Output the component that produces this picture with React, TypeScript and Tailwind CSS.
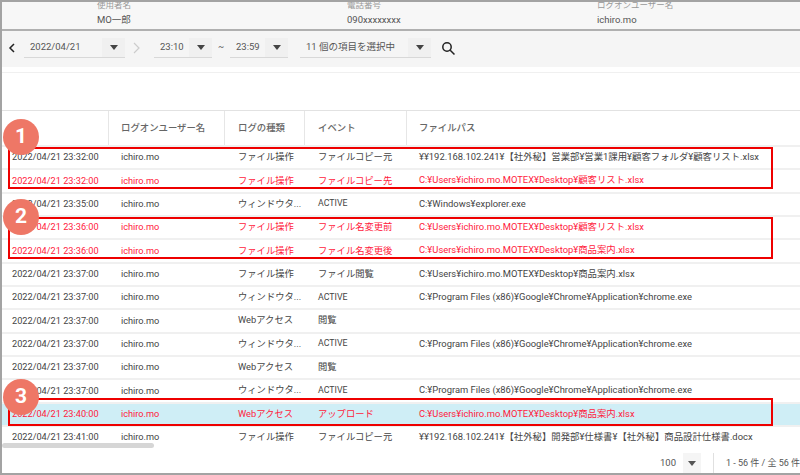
import React from "react";

type Row = { d: string; t: string; e: string; p: string; red?: boolean; blue?: boolean };
const rows: Row[] = [
  { d: "2022/04/21 23:32:00", t: "ファイル操作", e: "ファイルコピー元", p: "¥¥192.168.102.241¥【社外秘】営業部¥営業1課用¥顧客フォルダ¥顧客リスト.xlsx" },
  { d: "2022/04/21 23:32:00", t: "ファイル操作", e: "ファイルコピー先", p: "C:¥Users¥ichiro.mo.MOTEX¥Desktop¥顧客リスト.xlsx", red: true },
  { d: "2022/04/21 23:35:00", t: "ウィンドウタ...", e: "ACTIVE", p: "C:¥Windows¥explorer.exe" },
  { d: "2022/04/21 23:36:00", t: "ファイル操作", e: "ファイル名変更前", p: "C:¥Users¥ichiro.mo.MOTEX¥Desktop¥顧客リスト.xlsx", red: true },
  { d: "2022/04/21 23:36:00", t: "ファイル操作", e: "ファイル名変更後", p: "C:¥Users¥ichiro.mo.MOTEX¥Desktop¥商品案内.xlsx", red: true },
  { d: "2022/04/21 23:37:00", t: "ファイル操作", e: "ファイル閲覧", p: "C:¥Users¥ichiro.mo.MOTEX¥Desktop¥商品案内.xlsx" },
  { d: "2022/04/21 23:37:00", t: "ウィンドウタ...", e: "ACTIVE", p: "C:¥Program Files (x86)¥Google¥Chrome¥Application¥chrome.exe" },
  { d: "2022/04/21 23:37:00", t: "Webアクセス", e: "閲覧", p: "" },
  { d: "2022/04/21 23:37:00", t: "ウィンドウタ...", e: "ACTIVE", p: "C:¥Program Files (x86)¥Google¥Chrome¥Application¥chrome.exe" },
  { d: "2022/04/21 23:37:00", t: "Webアクセス", e: "閲覧", p: "" },
  { d: "2022/04/21 23:37:00", t: "ウィンドウタ...", e: "ACTIVE", p: "C:¥Program Files (x86)¥Google¥Chrome¥Application¥chrome.exe" },
  { d: "2022/04/21 23:40:00", t: "Webアクセス", e: "アップロード", p: "C:¥Users¥ichiro.mo.MOTEX¥Desktop¥商品案内.xlsx", red: true, blue: true },
  { d: "2022/04/21 23:41:00", t: "ファイル操作", e: "ファイルコピー元", p: "¥¥192.168.102.241¥【社外秘】開発部¥仕様書¥【社外秘】商品設計仕様書.docx" },
];

function Select({ w, label }: { w: string; label: string }) {
  return (
    <div className={`flex h-[20px] items-center justify-between border-b border-[#d8d8d8] ${w}`}>
      <span className="pl-[6px] text-[9.5px] text-[#555]">{label}</span>
      <div className="flex h-full w-[23px] shrink-0 items-center justify-center bg-[#f0f0f0]">
        <div className="h-0 w-0 border-x-[4px] border-t-[5px] border-x-transparent border-t-[#444]" />
      </div>
    </div>
  );
}

function Badge({ n, cls }: { n: string; cls: string }) {
  return (
    <div className={`absolute left-[1px] flex h-[36px] w-[36px] items-center justify-center rounded-full bg-[#ee7766] text-[21px] font-bold text-white ${cls}`}>
      {n}
    </div>
  );
}

function Info({ w, label, value }: { w: string; label: string; value: string }) {
  return (
    <div className={w}>
      <div className="mt-[-3px] text-[8.5px] leading-[12px] text-[#999]">{label}</div>
      <div className="mt-[2px] text-[9.5px] leading-[14px] text-[#555]">{value}</div>
    </div>
  );
}

export default function App() {
  return (
    <div
      className="relative h-[475px] w-[800px] overflow-hidden border-y-2 border-l-2 border-[#a3a3a3] bg-white text-[10px] text-[#444]"
      style={{ fontFamily: '"Roboto", "Noto Sans CJK JP", sans-serif' }}
    >
      {/* user info */}
      <div className="flex h-[29px] border-b-2 border-[#b0b0b0] bg-[#f7f7f7] pl-[95px]">
        <Info w="w-[250px]" label="使用者名" value="MO一郎" />
        <Info w="w-[250px]" label="電話番号" value="090xxxxxxxx" />
        <Info w="" label="ログオンユーザー名" value="ichiro.mo" />
      </div>

      {/* toolbar */}
      <div className="flex h-[36px] items-center bg-[#f5f5f5] pb-[3px]">
        <svg width="10" height="10" viewBox="0 0 10 10" className="ml-[5px] mr-[7px]" fill="none" stroke="#222" strokeWidth="1.5"><path d="M7 1 3 5l4 4" /></svg>
        <Select w="w-[101px]" label="2022/04/21" />
        <svg width="10" height="12" viewBox="0 0 10 12" className="ml-[7px] mr-[12px]" fill="none" stroke="#ccc" strokeWidth="1.2"><path d="m2 1 5 5-5 5" /></svg>
        <Select w="w-[58px]" label="23:10" />
        <span className="mx-[6px] w-[6px] text-[9px] text-[#555]">~</span>
        <Select w="w-[58px]" label="23:59" />
        <div className="w-[12px]" />
        <Select w="w-[131px]" label="11 個の項目を選択中" />
        <svg width="15" height="15" viewBox="0 0 15 15" className="ml-[10px] mt-[1px]" fill="none" stroke="#222" strokeWidth="1.5"><circle cx="6" cy="6" r="4.2" /><path d="m9.2 9.2 4.3 4.3" /></svg>
      </div>

      <div className="h-[6px] border-b border-[#f0f0f0]" />

      <div className="h-[37px]" />

      {/* table */}
      <div className="border-t border-[#e2e2e2]">
        <div className="flex h-[34px] items-center text-[9.4px] font-medium text-[#666]">
          <div className="h-full w-[107px] border-r border-[#e6e6e6]" />
          <div className="flex h-full w-[116px] items-center border-r border-[#e6e6e6] pl-[12px]">ログオンユーザー名</div>
          <div className="flex h-full w-[80px] items-center border-r border-[#e6e6e6] pl-[13px]">ログの種類</div>
          <div className="flex h-full w-[102px] items-center border-r border-[#e6e6e6] pl-[13px]">イベント</div>
          <div className="flex h-full items-center pl-[12px]">ファイルパス</div>
        </div>
        {rows.map((r, i) => (
          <div
            key={i}
            className={`flex h-[23.33px] items-center border-t-2 border-[#f0f0f0] pb-[1px] text-[9.3px] ${r.red ? "text-[#ff1a3c]" : "text-[#444]"} ${r.blue ? "bg-[#cfeef6]" : ""}`}
          >
            <div className="w-[107px] pl-[10px] whitespace-nowrap text-[9.2px]">{r.d}</div>
            <div className="w-[116px] pl-[12px] text-[9.2px]">ichiro.mo</div>
            <div className="w-[80px] pl-[13px] whitespace-nowrap">{r.t}</div>
            <div className={`w-[102px] pl-[13px] whitespace-nowrap ${r.e === "ACTIVE" ? "text-[8.8px]" : ""}`}>{r.e}</div>
            <div className="pl-[12px] whitespace-nowrap text-[9.4px]">{r.p}</div>
          </div>
        ))}
      </div>

      {/* scrollbar */}
      <div className="relative mt-[-5px] h-[5px] w-[152px] rounded-full bg-[#d6d6d6]" />

      {/* pagination */}
      <div className="mt-[4px] flex h-[22px] items-center pl-[658px] text-[9px] text-[#555]">
        <span className="w-[29px] text-[9.5px]">100</span>
        <div className="flex h-[21px] w-[22px] items-center justify-center bg-[#f5f5f5]">
          <div className="h-0 w-0 border-x-[4px] border-t-[5px] border-x-transparent border-t-[#555]" />
        </div>
        <div className="ml-[12px] h-[20px] border-l border-[#e0e0e0] pl-[12px] leading-[20px] whitespace-nowrap">1 - 56 件 / 全 56 件</div>
      </div>

      {/* annotation overlays */}
      <div className="absolute left-[6px] top-[145px] h-[42px] w-[765px] border-2 border-[#ee0000]" />
      <div className="absolute left-[6px] top-[215px] h-[42px] w-[765px] border-2 border-[#ee0000]" />
      <div className="absolute left-[6px] top-[396px] h-[28px] w-[765px] border-2 border-[#ee0000]" />
      <Badge n="1" cls="top-[117px]" />
      <Badge n="2" cls="top-[197px]" />
      <Badge n="3" cls="top-[377px]" />
    </div>
  );
}
